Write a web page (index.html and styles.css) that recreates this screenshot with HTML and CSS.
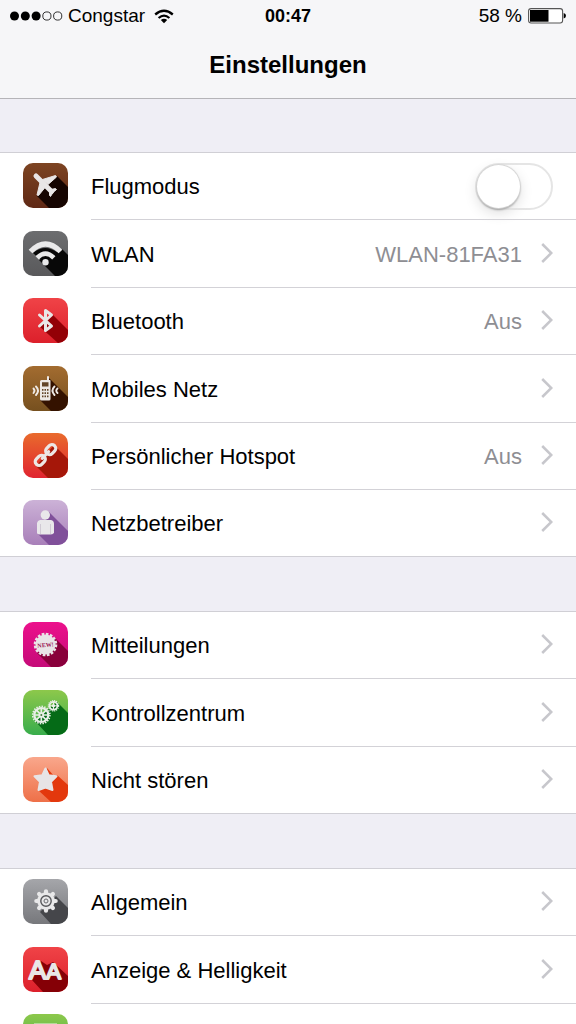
FILE: index.html
```html
<!DOCTYPE html>
<html lang="de">
<head>
<meta charset="utf-8">
<meta name="viewport" content="width=device-width, initial-scale=1">
<title>Einstellungen</title>
<link rel="stylesheet" href="styles.css">
</head>
<body>
<div class="screen">
<header class="header">
  <div class="status">
    <div class="carrier">
      <svg class="signal" width="53" height="10" viewBox="0 0 53 10" aria-hidden="true"><circle cx="4.5" cy="5" r="4.5"/><circle cx="15.3" cy="5" r="4.5"/><circle cx="26.1" cy="5" r="4.5"/><g fill="none" stroke="#000" stroke-width=".8"><circle cx="36.9" cy="5" r="4.1"/><circle cx="47.7" cy="5" r="4.1"/></g></svg>
      <span>Congstar</span>
      <svg class="wifi" width="20" height="15" viewBox="0 0 20 15" aria-hidden="true"><g fill="none" stroke="#000" stroke-width="2.3"><path d="M1.2 5.5Q10-2 18.8 5.5"/><path d="M4.6 9Q10 4.3 15.4 9"/></g><path d="M6.8 11.1Q10 8.4 13.2 11.1L10 14.3Z"/></svg>
    </div>
    <time class="clock">00:47</time>
    <div class="power">
      <span>58 %</span>
      <svg width="38" height="16" viewBox="0 0 38 16" aria-hidden="true"><rect x=".6" y=".6" width="34" height="14.4" rx="2.5" fill="#fff" stroke="#555" stroke-width="1.1"/><path d="M2 2H20.500V13.700H2Z"/><path d="M35.700 5Q38 5.500 38 7.800Q38 10 35.700 10.600Z"/></svg>
    </div>
  </div>
  <h1 class="title">Einstellungen</h1>
</header>
<main class="groups">
<section class="group">
  <div class="row">
    <svg class="icon brown" viewBox="0 0 45 45" aria-hidden="true"><path fill="#160501" d="M34 13L45 24V45H26L14 33L24 21Z"/><g fill="#e9e6e6" stroke="#e9e6e6" stroke-linejoin="round"><path fill="none" stroke-width="5" stroke-linecap="round" d="M13 13L28.500 28.500"/><path d="M19.500 16.500L32.500 12.500L33.500 14L25 21.500ZM17 19.500L14 32L15.500 32.500L22 24.500ZM28 26.500L32.500 25.500L33.500 26.500L30 29.500ZM26.500 28L26.500 32.500L27.500 33.500L30 29.500Z"/></g></svg>
    <div class="content"><label class="name" for="flight">Flugmodus</label><input class="switch" id="flight" type="checkbox" role="switch"></div>
  </div>
  <a class="row" href="#wlan">
    <svg class="icon gray" viewBox="0 0 45 45" aria-hidden="true"><path fill="#080808" d="M39 18L45 24V45H32L16 29Z"/><path fill="#6b6c6e" d="M16 29L6 20L22 14L28 25Z"/><path fill="#080808" d="M22 33L10 22Q22 12 35 22Z"/><g fill="none" stroke="#e9e9ea"><path stroke-width="5.200" d="M7.500 20.500Q22.500 5.500 37.500 20.500"/><path stroke-width="4.600" d="M14.200 26.800Q22.500 18.500 30.800 26.800"/></g><circle cx="22.500" cy="31.300" r="3.200" fill="#e9e9ea"/></svg>
    <span class="content"><span class="name">WLAN</span><span class="value">WLAN-81FA31</span><svg class="chevron" viewBox="0 0 12 20"><path d="M1.200 1L10.300 10L1.200 19"/></svg></span>
  </a>
  <a class="row" href="#bluetooth">
    <svg class="icon red" viewBox="0 0 45 45" aria-hidden="true"><path fill="#930006" d="M29 16L45 32V45H35L16 28Z"/><path fill="none" stroke="#e9e6e6" stroke-width="3" stroke-linejoin="round" stroke-linecap="round" d="M16.500 17L28.500 28L22.500 32.500V12.500L28.500 17L16.500 28"/></svg>
    <span class="content"><span class="name">Bluetooth</span><span class="value">Aus</span><svg class="chevron" viewBox="0 0 12 20"><path d="M1.200 1L10.300 10L1.200 19"/></svg></span>
  </a>
  <a class="row" href="#mobil">
    <svg class="icon bronze" viewBox="0 0 45 45" aria-hidden="true"><path fill="#341200" d="M26 12L45 31V45H28L17 34Z"/><path fill="#eee9e5" d="M24 10.500Q25 9.500 26 10.500V14H27Q27.500 14 27.500 15V33Q27.500 34.500 26 34.500H18.500Q17 34.500 17 33V15.500Q17 14 18.500 14H24Z"/><path fill="#634528" d="M19 16.300H25.500V20.500H19ZM19 23H20.500V24.700H19ZM21.500 23H23V24.700H21.500ZM24 23H25.500V24.700H24ZM19 26.300H20.500V28H19ZM21.500 26.300H23V28H21.500ZM24 26.300H25.500V28H24ZM19 29.600H20.500V31.300H19ZM21.500 29.600H23V31.300H21.500ZM24 29.600H25.500V31.300H24Z"/><path fill="none" stroke="#eee9e5" stroke-width="1.900" stroke-linecap="round" d="M13 20.500Q17 24.500 13 29M10.500 22.500Q12.500 24.700 10.500 27M31.500 20.500Q27.500 24.500 31.500 29M34.500 22.500Q32 24.700 34.500 27"/></svg>
    <span class="content"><span class="name">Mobiles Netz</span><svg class="chevron" viewBox="0 0 12 20"><path d="M1.200 1L10.300 10L1.200 19"/></svg></span>
  </a>
  <a class="row" href="#hotspot">
    <svg class="icon orange" viewBox="0 0 45 45" aria-hidden="true"><path fill="#a51709" d="M31 12L45 26V45H25L13 33Z"/><g transform="rotate(-46 22.500 22)" fill="none" stroke="#ece7e5" stroke-width="3.200"><rect x="9.500" y="18.200" width="11" height="7.600" rx="3.600"/><rect x="24.500" y="18.200" width="11" height="7.600" rx="3.600"/><path stroke-linecap="round" d="M18 22H27"/></g></svg>
    <span class="content"><span class="name">Persönlicher Hotspot</span><span class="value">Aus</span><svg class="chevron" viewBox="0 0 12 20"><path d="M1.200 1L10.300 10L1.200 19"/></svg></span>
  </a>
  <a class="row" href="#netzbetreiber">
    <svg class="icon lilac" viewBox="0 0 45 45" aria-hidden="true"><path fill="#80509a" d="M26 12L45 31V45H26L15 34Z"/><circle cx="22.300" cy="15" r="4.700" fill="#e9e7ea"/><path fill="#e9e7ea" d="M17 20H28Q31 20.500 31 24V33Q29.500 34.500 27 34.500H18Q14.500 34.500 14 33V23Q14.500 20.500 17 20Z"/><path stroke="#c9c1ce" stroke-width=".8" d="M17.500 24V34M27.500 24V34"/></svg>
    <span class="content"><span class="name">Netzbetreiber</span><svg class="chevron" viewBox="0 0 12 20"><path d="M1.200 1L10.300 10L1.200 19"/></svg></span>
  </a>
</section>
<section class="group">
  <a class="row" href="#mitteilungen">
    <svg class="icon pink" viewBox="0 0 45 45" aria-hidden="true"><path fill="#89003b" d="M31 15L45 29V45H28L14 31Z"/><circle cx="22.500" cy="22.500" r="10" fill="#e9e4e7"/><circle cx="22.500" cy="22.500" r="10.300" fill="none" stroke="#e9e4e7" stroke-width="3" stroke-dasharray="2.600 1.445"/><text class="badge-text" x="22.500" y="25" text-anchor="middle" transform="rotate(-5 22.500 22.500)">NEW!</text></svg>
    <span class="content"><span class="name">Mitteilungen</span><svg class="chevron" viewBox="0 0 12 20"><path d="M1.200 1L10.300 10L1.200 19"/></svg></span>
  </a>
  <a class="row" href="#kontrollzentrum">
    <svg class="icon green" viewBox="0 0 45 45" aria-hidden="true"><path fill="#056b17" d="M34 12L45 23V45H25L12 31Z"/><g fill="none" stroke="#e9eee7"><circle cx="18.300" cy="25" r="7" stroke-width="2.200"/><circle cx="18.300" cy="25" r="8.600" stroke-width="1.600" stroke-dasharray="1.500 1.200"/><path stroke-width="1.700" d="M18.300 18V32M11.300 25H25.300M13.400 20.100L23.200 29.900M13.400 29.900L23.200 20.100"/><circle cx="30.500" cy="15.800" r="3.900" stroke-width="1.700"/><circle cx="30.500" cy="15.800" r="5.100" stroke-width="1.300" stroke-dasharray="1.100 .9"/><path stroke-width="1" d="M30.500 12V19.600M26.700 15.800H34.300"/></g><circle cx="18.300" cy="25" r="2.800" fill="#e9eee7"/><circle cx="18.300" cy="25" r="1" fill="#447a3c"/><circle cx="30.500" cy="15.800" r="1.700" fill="#e9eee7"/></svg>
    <span class="content"><span class="name">Kontrollzentrum</span><svg class="chevron" viewBox="0 0 12 20"><path d="M1.200 1L10.300 10L1.200 19"/></svg></span>
  </a>
  <a class="row" href="#nicht-stoeren">
    <svg class="icon peach" viewBox="0 0 45 45" aria-hidden="true"><path fill="#e3380d" d="M24 11L31 19L34 18L45 28V45H28L15 33Z"/><path fill="#e7e4e6" stroke="#e7e4e6" stroke-width="2" stroke-linejoin="round" d="M22.500 11.500L25.700 18.300L33.500 19.300L28 24.800L29.500 33L22.500 30.500L15.500 33L17 24.800L11.500 19.300L19.300 18.300Z"/></svg>
    <span class="content"><span class="name">Nicht stören</span><svg class="chevron" viewBox="0 0 12 20"><path d="M1.200 1L10.300 10L1.200 19"/></svg></span>
  </a>
</section>
<section class="group">
  <a class="row" href="#allgemein">
    <svg class="icon silver" viewBox="0 0 45 45" aria-hidden="true"><path fill="#45464a" d="M33 17L45 29V45H28L17 33Z"/><g stroke="#e8e8e9" stroke-width="4.200" stroke-linecap="round"><path d="M23 12.300V31.700M13.300 22H32.700M16.100 15.100L29.900 28.900M16.100 28.900L29.900 15.100"/></g><circle cx="23" cy="22" r="8.800" fill="#e8e8e9"/><circle cx="23" cy="22" r="5.200" fill="none" stroke="#55565a" stroke-width="1.400"/><circle cx="23" cy="22" r="2" fill="none" stroke="#68696d"/></svg>
    <span class="content"><span class="name">Allgemein</span><svg class="chevron" viewBox="0 0 12 20"><path d="M1.200 1L10.300 10L1.200 19"/></svg></span>
  </a>
  <a class="row" href="#anzeige">
    <svg class="icon red" viewBox="0 0 45 45" aria-hidden="true"><path fill="#850006" d="M18 14L24 18L30 15L45 29V45H20L9 33Z"/><text class="letters" x="22" y="32" text-anchor="middle">A<tspan class="letter-small">A</tspan></text></svg>
    <span class="content"><span class="name">Anzeige &amp; Helligkeit</span><svg class="chevron" viewBox="0 0 12 20"><path d="M1.200 1L10.300 10L1.200 19"/></svg></span>
  </a>
  <a class="row" href="#weitere" aria-label="Weitere Einstellungen">
    <svg class="icon green" viewBox="0 0 45 45" aria-hidden="true"><path fill="#eaf2e5" d="M11 9.500H34V34H11Z"/></svg>
    <span class="content"></span>
  </a>
</section>
</main>
</div>
</body>
</html>
```
FILE: styles.css
```css
* { box-sizing: border-box; }

body {
  margin: 0;
  background: #efeef5;
  color: #000;
  font-family: "Liberation Sans", Arial, sans-serif;
}

.screen {
  height: 100vh;
  overflow: hidden;
}

.header {
  background: #f6f6f8;
  border-bottom: 1px solid #b5b4b8;
}

.status {
  display: grid;
  grid-template-columns: 1fr auto 1fr;
  align-items: center;
  height: 32px;
  padding: 0 10px;
  font-size: 19px;
}

.carrier,
.power {
  display: flex;
  align-items: center;
}

.carrier { gap: 5px; }
.wifi { margin-left: 4px; }

.power {
  justify-content: flex-end;
  gap: 6px;
}

.clock {
  font-size: 18px;
  font-weight: bold;
}

.title {
  margin: 0;
  height: 66px;
  font-size: 24px;
  line-height: 66px;
  font-weight: bold;
  text-align: center;
}

.groups {
  display: flex;
  flex-direction: column;
  gap: 54px;
  padding-top: 53px;
}

.group {
  background: #fff;
  border-top: 1px solid #d0cfd5;
  border-bottom: 1px solid #d0cfd5;
}

.row {
  display: flex;
  align-items: center;
  height: 67px;
  padding-left: 23px;
  color: inherit;
  text-decoration: none;
}

.row:nth-child(even) { height: 68px; }
.row:last-child { height: 66px; }

.content {
  display: flex;
  flex: 1;
  align-items: center;
  align-self: stretch;
  margin-left: 23px;
  padding-right: 23px;
  border-bottom: 1px solid #d3d2d7;
  font-size: 22px;
  line-height: 26px;
}

.row:last-child .content { border-bottom: 0; }

.name {
  flex: 1;
  padding-top: 2px;
}

.value {
  padding-top: 2px;
  color: #8e8e93;
}

.chevron {
  width: 12px;
  height: 20px;
  margin: 0 0 2px 19px;
  fill: none;
  stroke: #c7c7cc;
  stroke-width: 2.5;
}

.switch {
  appearance: none;
  flex: none;
  width: 78px;
  height: 47px;
  margin: 0;
  border: 2px solid #e5e5e5;
  border-radius: 24px;
  background: #fff;
}

.switch::before {
  content: "";
  display: block;
  width: 43px;
  height: 43px;
  border-radius: 50%;
  background: #fff;
  box-shadow: 0 0 1px 1px #d4d4d4, 0 2px 2px #999, 0 5px 14px #ddd;
}

.switch:checked { background: #4cd964; }
.switch:checked::before { margin-left: auto; }

.icon {
  flex: none;
  width: 45px;
  height: 45px;
  margin-bottom: 2px;
  border-radius: 10px;
  overflow: hidden;
}

.brown { background: linear-gradient(#7d4422, #5f2815); }
.gray { background: linear-gradient(#6c6d6f, #59595b); }
.red { background: linear-gradient(#f04347, #dc202b); }
.bronze { background: linear-gradient(#a36c30, #76501f); }
.orange { background: linear-gradient(#e96b2d, #e02430); }
.lilac { background: linear-gradient(#ccb2d7, #a87fb9); }
.pink { background: linear-gradient(#ec118c, #c50b78); }
.green { background: linear-gradient(#8dc84b, #38ad4c); }
.peach { background: linear-gradient(#f9a78c, #ee7048); }
.silver { background: linear-gradient(#a5a6aa, #77787c); }

.badge-text {
  fill: #9b1652;
  font: bold 6px "Liberation Serif", serif;
}

.letters {
  fill: #e9e6e6;
  stroke: #e9e6e6;
  stroke-width: 2px;
  stroke-linejoin: round;
  font-size: 26px;
}

.letter-small { font-size: 22px; }
```
